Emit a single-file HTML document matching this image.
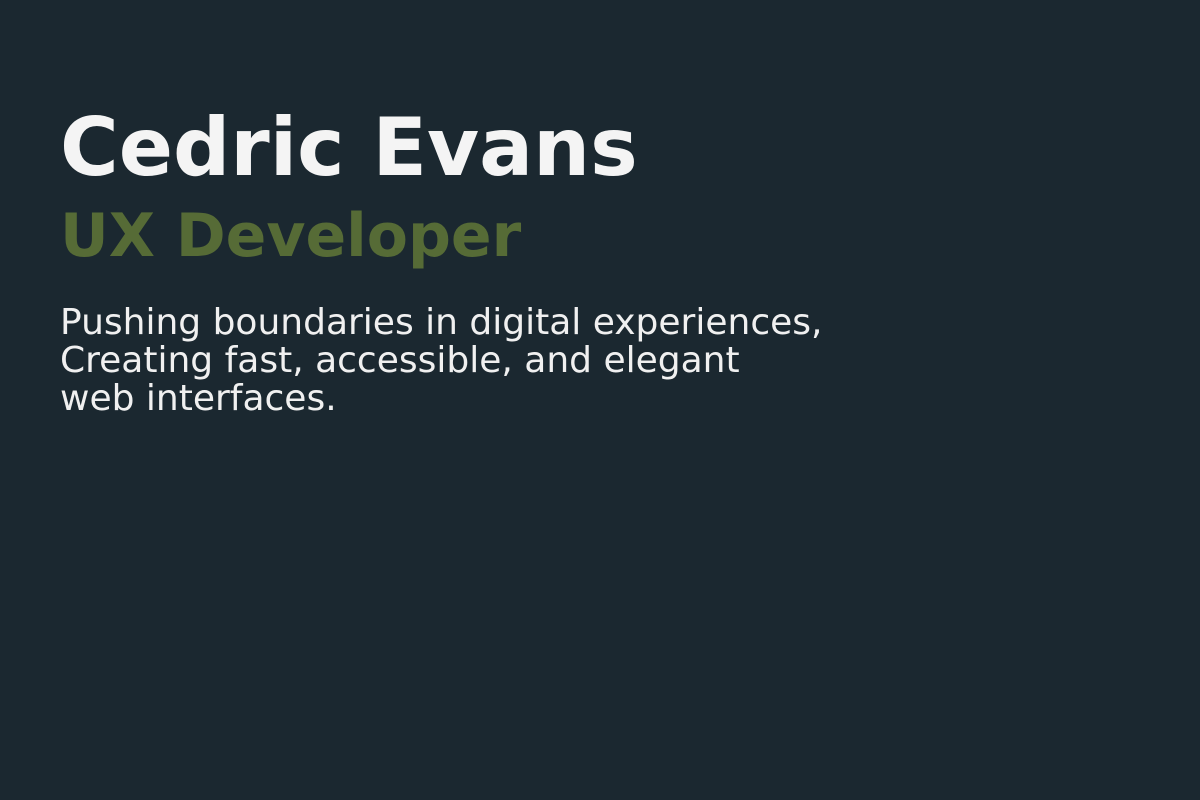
<!DOCTYPE html>
<html><head><style>
html,body{margin:0;padding:0;width:1200px;height:800px;background:#1b2830;overflow:hidden;font-family:"DejaVu Sans","Liberation Sans",sans-serif}
.a{position:absolute;left:60px;white-space:nowrap}
h1{margin:0;font-size:80px;font-weight:bold;color:#f4f4f4;top:100px;line-height:96px}
h2{margin:0;font-size:60px;font-weight:bold;color:#566b36;top:198px;line-height:76px}
p{margin:0;font-size:36px;color:#f0f0f0;top:304px;line-height:38px}
</style></head><body>
<h1 class="a">Cedric Evans</h1>
<h2 class="a">UX Developer</h2>
<p class="a">Pushing boundaries in digital experiences,<br>Creating fast, accessible, and elegant<br>web interfaces.</p>
</body></html>
